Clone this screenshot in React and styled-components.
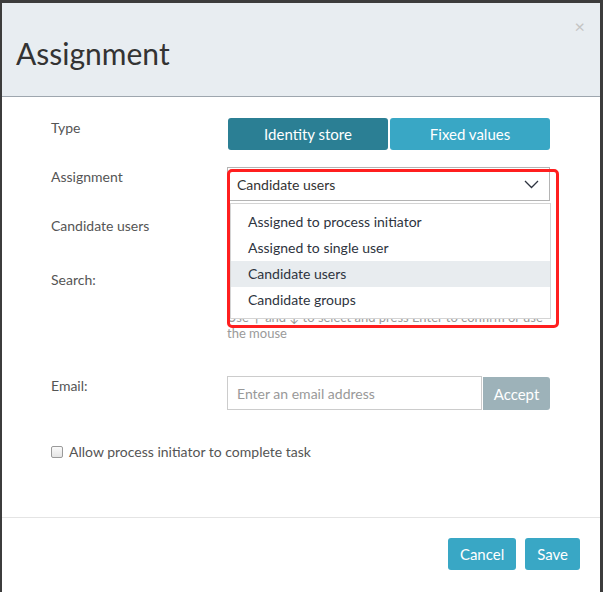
import { styled, createGlobalStyle } from "styled-components";

const GlobalStyle = createGlobalStyle`
	html, body {
		margin: 0;
		padding: 0;
		background: #3c3c3c;
	}
	body {
		font-family: Lato, "Open Sans", sans-serif;
		-webkit-font-smoothing: antialiased;
	}
`;

const Page = styled.div`
	padding: 3px 3px 0 2px;
	width: 603px;
	height: 592px;
	box-sizing: border-box;
	overflow: hidden;
`;

const Modal = styled.div`
	background: #fff;
	height: 589px;
	display: flex;
	flex-direction: column;
`;

const Header = styled.div`
	position: relative;
	background: #e8edf1;
	height: 93px;
	border-bottom: 1px solid #9ea6ae;
	display: flex;
	align-items: center;
	padding: 0 14px;
`;

const Title = styled.h1`
	margin: 6px 0 0;
	font-weight: 400;
	font-size: 30px;
	color: #333;
`;

const Close = styled.span`
	position: absolute;
	right: 15px;
	top: 14px;
	font-size: 18px;
	color: #c4c4c4;
	line-height: 1;
`;

const Body = styled.div`
	padding: 21px 51px 0 49px;
	flex: 1;
`;

const Row = styled.div`
	display: grid;
	grid-template-columns: 176px 323px;
	margin-bottom: ${(p) => p.$gap || 17}px;
	position: relative;
`;

const Label = styled.div`
	font-size: 14px;
	line-height: 20px;
	color: #555;
`;

const Toggle = styled.div`
	display: flex;
	gap: 2px;
	padding-left: 1px;
`;

const ToggleButton = styled.button`
	flex: 1;
	height: 32px;
	border: none;
	border-radius: 3px;
	background: ${(p) => (p.$active ? "#2b7f94" : "#39a7c5")};
	color: #fff;
	font-family: inherit;
	font-size: 15px;
`;

const Select = styled.div`
	height: 34px;
	box-sizing: border-box;
	border: 1px solid #b4b4b4;
	display: flex;
	align-items: center;
	justify-content: space-between;
	padding: 0 10px 0 9px;
	font-size: 14px;
	color: #333;
`;

const Menu = styled.ul`
	position: absolute;
	z-index: 2;
	left: 179px;
	top: 36px;
	width: 321px;
	margin: 0;
	padding: 5px 0 4px;
	list-style: none;
	background: #fff;
	border: 1px solid #d4d4d4;
	box-sizing: border-box;
	height: 116px;
`;

const MenuItem = styled.li`
	height: 26px;
	line-height: 26px;
	padding-left: 17px;
	font-size: 14px;
	color: #2e3440;
	background: ${(p) => (p.$active ? "#e8ecef" : "transparent")};
`;

const Highlight = styled.div`
	position: absolute;
	z-index: 3;
	left: 176px;
	top: 2px;
	width: 332px;
	height: 159px;
	box-sizing: border-box;
	border: 3px solid #ff1f1f;
	border-radius: 5px;
	pointer-events: none;
`;

const Empty = styled.div`
	height: 37px;
`;

const Field = styled.div`
	display: flex;
	flex-direction: column;
`;

const Input = styled.input`
	height: 34px;
	width: 100%;
	box-sizing: border-box;
	border: 1px solid #ccc;
	padding: 0 9px;
	font-family: inherit;
	font-size: 14px;
	color: #333;
	min-width: 0;
	&::placeholder {
		color: #999;
	}
`;

const Hint = styled.div`
	margin-top: 5px;
	font-size: 13px;
	line-height: 16px;
	color: #9a9a9a;
`;

const InputGroup = styled.div`
	display: flex;
`;

const AddonButton = styled.button`
	flex-shrink: 0;
	width: 67px;
	height: 33px;
	margin-left: 1px;
	margin-top: 1px;
	border: none;
	border-radius: 0 3px 3px 0;
	background: #9db2b9;
	color: #fff;
	font-family: inherit;
	font-size: 15px;
`;

const Check = styled.label`
	display: flex;
	align-items: center;
	gap: 6px;
	font-size: 14px;
	line-height: 20px;
	color: #555;
`;

const Box = styled.span`
	width: 10px;
	height: 10px;
	border: 1px solid #9a9a9a;
	border-radius: 2px;
	background: linear-gradient(#fafafa, #e4e4e4);
`;

const Footer = styled.div`
	border-top: 1px solid #e4e4e4;
	height: 75px;
	box-sizing: border-box;
	display: flex;
	justify-content: flex-end;
	align-items: flex-start;
	gap: 9px;
	padding: 20px 20px 0;
`;

const FooterButton = styled.button`
	height: 32px;
	padding: 0 12px;
	border: none;
	border-radius: 3px;
	background: #39a7c5;
	color: #fff;
	font-family: inherit;
	font-size: 15px;
`;

const Chevron = () => (
	<svg width="15" height="9" viewBox="0 0 15 9">
		<path d="M1 1l6.5 6.5L14 1" fill="none" stroke="#2e3440" strokeWidth="1.3" />
	</svg>
);

const options = [
	"Assigned to process initiator",
	"Assigned to single user",
	"Candidate users",
	"Candidate groups",
];

const App = () => {
	return (
		<Page>
			<GlobalStyle />
			<Modal>
				<Header>
					<Title>Assignment</Title>
					<Close>×</Close>
				</Header>
				<Body>
					<Row>
						<Label>Type</Label>
						<Toggle>
							<ToggleButton $active>Identity store</ToggleButton>
							<ToggleButton>Fixed values</ToggleButton>
						</Toggle>
					</Row>
					<Row $gap={15}>
						<Label>Assignment</Label>
						<Select>
							Candidate users
							<Chevron />
						</Select>
						<Menu>
							{options.map((o) => (
								<MenuItem key={o} $active={o === "Candidate users"}>
									{o}
								</MenuItem>
							))}
						</Menu>
						<Highlight />
					</Row>
					<Row>
						<Label>Candidate users</Label>
						<Empty />
					</Row>
					<Row $gap={35}>
						<Label>Search:</Label>
						<Field>
							<Input />
							<Hint>
								Use ↑ and ↓ to select and press Enter to confirm or use the mouse
							</Hint>
						</Field>
					</Row>
					<Row $gap={32}>
						<Label>Email:</Label>
						<InputGroup>
							<Input placeholder="Enter an email address" />
							<AddonButton>Accept</AddonButton>
						</InputGroup>
					</Row>
					<Check>
						<Box />
						Allow process initiator to complete task
					</Check>
				</Body>
				<Footer>
					<FooterButton>Cancel</FooterButton>
					<FooterButton>Save</FooterButton>
				</Footer>
			</Modal>
		</Page>
	);
};

export default App;
